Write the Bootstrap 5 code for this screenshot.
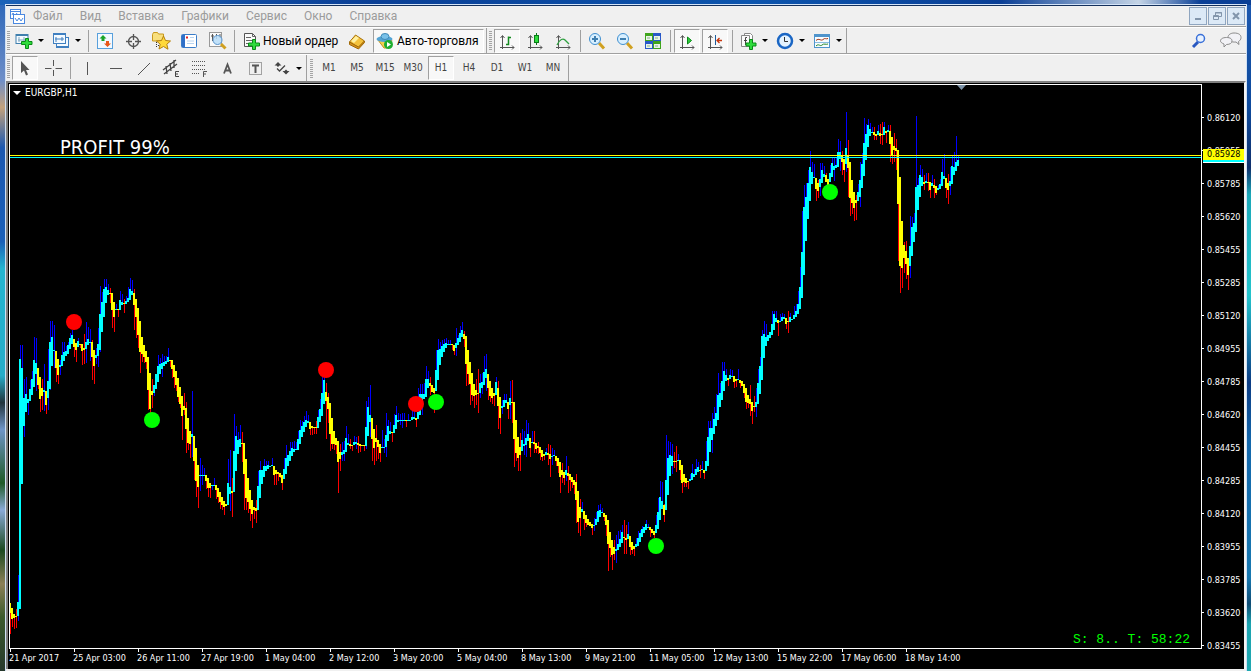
<!DOCTYPE html>
<html lang="ru">
<head>
<meta charset="utf-8">
<meta name="viewport" content="width=device-width, initial-scale=1">
<title>EURGBP,H1</title>
<link href="https://cdn.jsdelivr.net/npm/bootstrap@5.3.0/dist/css/bootstrap.min.css" rel="stylesheet">
<style>
  body{font-family:Roboto,"Noto Sans",sans-serif;font-size:12px;line-height:16px;color:#000;
    background:linear-gradient(90deg,#1c63b8,#0a3f96 30%,#0c55ae 60%,#0a3f96 80%,#c4d4e6 91%,#0a3f96 96%) top/100% 5px no-repeat,
    linear-gradient(180deg,#1c58b0 0,#0e4a9c 16%,#10306c 25%,#1ca8b8 29%,#24c4cc 44%,#0c3c84 57%,#1468ac 66%,#1878b0 86%,#104c74 90%,#1ca4b0 93%,#20a8b0 100%) right/12px 100% no-repeat,
    linear-gradient(180deg,#2c66b8 0,#6f8fc8 12%,#c4a27c 16%,#1c58b0 22%,#1b60b8 36%,#25b5d0 40%,#27acc8 56%,#22343c 60%,#6f95c8 64%,#1f5a26 72%,#8aaad8 76%,#1c4a20 82%,#8c8058 87%,#3c5a2c 92%,#26382c 100%);}
  .desktop{padding:4px 4px 0 5px;min-height:100vh}
  .win{background:#f0f0f0;border:1px solid #cfe0f4;border-top:1px solid #d4e4f8;border-bottom:0;box-shadow:inset 0 1px #14305c}
  .menu{height:22px;border-bottom:1px solid #a0a0a0;padding:1px 1px 0 4px}
  .menu a{color:#9b9b9b;text-decoration:none}
  .menu nav{gap:17px;margin-left:8px}
  .mdi{width:18px;height:18px;border:1px solid #8fa5bf;background:#dce9f6;padding:0}
  .mdi svg{display:block;margin:auto}
  .bar{height:27px;border-top:1px solid #fff}
  .bar.one{border-bottom:1px solid #a0a0a0;height:27px}
  .bar button{border:0;background:none;padding:0;color:#000;height:26px}
  .grip{width:3px;height:19px;margin:0 1px;background:repeating-linear-gradient(#a4a4a4 0 1px,#f0f0f0 1px 2px)}
  .grip.wide{margin:0 2px 0 3px}
  .tb{width:28px}
  .dd{width:37px;padding-left:4px!important;gap:5px}
  .dd::after{content:"";border:3px solid #0000;border-top-color:#000;border-bottom:0}
  .vsep{width:6px;height:22px;border-left:1px solid #a0a0a0;margin-left:3px;margin-right:-3px}
  .edge{width:1px;height:26px;background:#a0a0a0;margin:0 1px}
  .bar .on{background:#f8f8f8;border:1px solid;border-color:#a0a0a0 #fff #fff #a0a0a0;width:26px;margin:0 1px;height:24px}
  .bar .auto{width:111px;margin-left:2px;padding-left:2px;gap:3px}
  .bar .order{width:106px;padding-left:6px;gap:3px}
  .bar .tf{font:10px/14px "DejaVu Sans Condensed","DejaVu Sans",sans-serif;color:#444}
  svg{flex:none}
  .chart{background:#000;color:#fff;border-top:2px solid #808080;border-left:2px solid #808080;border-right:2px solid #f4f4f4;padding:1px 0 0 1px;font:9px/12px "DejaVu Sans Condensed","DejaVu Sans",sans-serif}
  .plot{border:1px solid #fff;height:565px;min-width:0}
  .plot svg{display:block}
  .symbol{left:3px;top:2px;font-size:10px}
  .profit{left:50px;top:50px;font-size:20px;line-height:24px}
  .stat{right:11px;bottom:1px;font:13px/14px "Liberation Mono",monospace;color:#0f0;white-space:pre}
  .hl{left:0;right:0;height:1px}
  .bid{top:70px;background:#ff0}
  .ask{top:72px;background:#0ff}
  .shift{top:0;left:79.5%}
  .axis{width:42px;height:565px;padding-top:17px}
  .axis span{display:flex;align-items:center;height:33px;gap:3px}
  .axis span::before{content:"";width:2px;height:1px;background:#fff}
  .now{left:1px;right:0;top:65px;height:14px;background:#ff0;color:#000;border-bottom:1px solid #fff;box-shadow:inset 0 -2px #0ff;padding-left:4px;line-height:11px}
  .times{height:20px}
  .times span{flex:0 0 64px;white-space:nowrap;position:relative;padding-top:3px}
  .times span::before{content:"";position:absolute;left:1px;top:0;width:1px;height:3px;background:#fff}
  .foot{height:2px}
</style>
</head>
<body>
<div class="desktop d-flex flex-column">
<main class="win flex-grow-1 d-flex flex-column">
  <header class="menu d-flex align-items-center">
    <svg width="15" height="15" viewBox="0 0 15 15" fill="#fff" stroke="#4a88e0"><rect x=".5" y=".5" width="10" height="9"/><path d="M0 2.500h10M2 6l1-2 2 3 2-3"/><rect x="3.500" y="5.500" width="11" height="9"/><path d="M5 9l2 3 2-3 2 3 2-3"/></svg>
    <nav class="d-flex" aria-label="Меню"><a href="#">Файл</a><a href="#">Вид</a><a href="#">Вставка</a><a href="#">Графики</a><a href="#">Сервис</a><a href="#">Окно</a><a href="#">Справка</a></nav>
    <div class="d-flex ms-auto" style="gap:1px">
      <button class="mdi" aria-label="Свернуть"><svg width="12" height="12"><path d="M3 9h6" stroke="#8295ab" stroke-width="2"/></svg></button>
      <button class="mdi" aria-label="Восстановить"><svg width="12" height="12" fill="none" stroke="#8295ab"><path d="M4.500 5V2.500h6v4H8M4 3h7M2 6.500h6M2.500 5.500h5v4h-5z"/></svg></button>
      <button class="mdi" aria-label="Закрыть"><svg width="12" height="12"><path d="M3 3l6 6M9 3l-6 6" stroke="#8295ab" stroke-width="2"/></svg></button>
    </div>
  </header>

  <div class="bar one d-flex align-items-center" role="toolbar" aria-label="Стандартная">
    <i class="grip"></i>
    <button class="dd d-flex align-items-center" aria-label="Новый график"><svg width="18" height="18"><rect x="1" y="2.500" width="12" height="9" fill="#f4faff" stroke="#3f7fae"/><path d="M1 3h12" stroke="#3f7fae" stroke-width="2"/><path d="M4 5v5M3 8h7M9 5v4" stroke="#7ea6c0"/><path d="M10.500 6.500h3v3h3.500v3h-3.500v4h-3v-4h-4v-3h4z" fill="#2fdc3c" stroke="#0a8a18"/></svg></button>
    <button class="dd d-flex align-items-center" aria-label="Профили"><svg width="18" height="18" fill="#f4faff" stroke="#3f7fc0"><rect x="4.500" y="5.500" width="12" height="10"/><path d="M4 14.500h12"/><rect x="1.500" y="1.500" width="12" height="10"/><path d="M2 2.500h11M4 5v5M3 7h9M10 5v4"/></svg></button>
    <i class="vsep"></i>
    <button class="tb" aria-label="Обзор рынка"><svg width="18" height="18"><rect x="1.500" y="1.500" width="15" height="15" fill="#f2f9ff" stroke="#58a0dc"/><path d="M7 3l3.500 3.500H8.500V9h-3V6.500h-2z" fill="#18a428"/><path d="M11.500 15l3.500-3.500h-2V9h-3v2.500H8z" fill="#e85818"/></svg></button>
    <button class="tb" aria-label="Перекрестие"><svg width="18" height="18" fill="none" stroke="#555" stroke-width="1.300"><circle cx="9.500" cy="9.500" r="5"/><path d="M9.500 2v6M9.500 11v6M2 9.500h6M11 9.500h6"/></svg></button>
    <button class="tb" aria-label="Навигатор"><svg width="20" height="19"><path d="M1.500 3.500l1-2h4l1 1.500h5v7h-11z" fill="#f8df7c" stroke="#c8981c"/><path d="M5.500 11v6M7 14.500h3" stroke="#333" stroke-dasharray="1 1"/><path d="M12.500 5l2 4.500 5 .5-3.700 3.200 1.200 5-4.500-2.700L8 18l1.200-4.800L5.500 10l5-.5z" fill="#ffd93a" stroke="#b4800e"/></svg></button>
    <button class="tb" aria-label="Терминал"><svg width="18" height="18"><rect x="1.500" y="2.500" width="15" height="13" rx="1" fill="#fff" stroke="#3a7cc8"/><path d="M2 3h3v12H2z" fill="#2f6fc8"/><path d="M6 5.500h2" stroke="#e02020" stroke-width="2"/><path d="M7 9h7M7 11.500h7M10 5.500h4" stroke="#b8d4f0"/></svg></button>
    <button class="tb" aria-label="Тестер"><svg width="19" height="19"><rect x="1.500" y="1.500" width="12" height="14" fill="#fafafa" stroke="#999"/><path d="M4.500 3v7M3 5h3M8.500 3v5M12 3v4" stroke="#555"/><circle cx="9.500" cy="9" r="4.500" fill="#b8dcf8dd" stroke="#5a94cc"/><path d="M13 13l4.500 4.500" stroke="#d0a020" stroke-width="3"/></svg></button>
    <i class="vsep"></i>
    <button class="order d-flex align-items-center"><svg width="17" height="18"><path d="M1.500 1.500h8l3 3v10h-11z" fill="#fafafa" stroke="#555"/><path d="M9.500 1.500v3h3M3 5.500h5M3 8.500h6M3 11.500h4" fill="none" stroke="#666"/><path d="M9.500 7.500h3v3.500h4v3h-4v3.500h-3v-3.500H5.500v-3h4z" fill="#2fdc3c" stroke="#0a8a18"/></svg>Новый&nbsp;ордер</button>
    <button class="tb" aria-label="MetaEditor"><svg width="18" height="18"><path d="M1.500 10l6-7 9 6-6 6.500z" fill="#f4c23c" stroke="#a87008"/><path d="M3 9l5-5 3 2-5 5z" fill="#fff0a0"/><path d="M1.500 10v2.500l9 4.500 6-6.500V9l-6 6z" fill="#d8921c" stroke="#a06a08"/></svg></button>
    <button class="on auto d-flex align-items-center"><svg width="18" height="18"><path d="M2 8h14l-5 8H8z" fill="#f2cf50" stroke="#c09420"/><ellipse cx="8.500" cy="7" rx="8" ry="3" fill="#54a4d4"/><ellipse cx="9" cy="4.500" rx="4" ry="3" fill="#78c0e8" stroke="#3f8ab8"/><circle cx="12.500" cy="12.500" r="4.500" fill="#1fae30"/><path d="M11 10v5l4-2.500z" fill="#fff"/></svg>Авто-торговля</button>
    <i class="edge"></i><i class="grip"></i>
    <button class="on" aria-label="Бары"><svg width="18" height="18" fill="none" stroke="#555"><path d="M4.500 17V4M2.500 6l2-2.500 2 2.500M2 15.500h14M14 13.500l2 2-2 2"/><path d="M8 12.500h2.500v-8M10.500 5.500H13" stroke="#148a20" stroke-width="1.500"/></svg></button>
    <button class="tb" aria-label="Свечи"><svg width="18" height="18" fill="none" stroke="#555"><path d="M4.500 17V4M2.500 6l2-2.500 2 2.500M2 15.500h14M14 13.500l2 2-2 2"/><path d="M10.500 1v12" stroke="#0a7a18"/><rect x="8.500" y="3.500" width="4" height="7" fill="#2fdc3c" stroke="#0a7a18"/></svg></button>
    <button class="tb" aria-label="Линия"><svg width="18" height="18" fill="none" stroke="#555"><path d="M4.500 17V4M2.500 6l2-2.500 2 2.500M2 15.500h14M14 13.500l2 2-2 2"/><path d="M3 13c3-6 6-7 8-5l4 4" stroke="#2fa040" stroke-width="1.300"/></svg></button>
    <i class="vsep"></i>
    <button class="tb" aria-label="Увеличить"><svg width="18" height="18"><path d="M11 11l5 5.500" stroke="#d0a020" stroke-width="3"/><circle cx="7" cy="7" r="5.500" fill="#d8efff" stroke="#3f8fd0"/><path d="M4 7h6M7 4v6" stroke="#3f7fb0" stroke-width="2"/></svg></button>
    <button class="tb" aria-label="Уменьшить"><svg width="18" height="18"><path d="M11 11l5 5.500" stroke="#d0a020" stroke-width="3"/><circle cx="7" cy="7" r="5.500" fill="#d8efff" stroke="#3f8fd0"/><path d="M4 7h6" stroke="#3f7fb0" stroke-width="2"/></svg></button>
    <button class="tb" aria-label="Окна"><svg width="18" height="18"><path d="M1 1h8v8H1zM9 9h8v8H9z" fill="#3fa41c"/><path d="M9 1h8v8H9zM1 9h8v8H1z" fill="#2858c8"/><path d="M2 4h6v4H2zM10 4h6v4h-6zM2 12h6v4H2zM10 12h6v4h-6z" fill="#e8f4e8"/><path d="M3 6h3M11 6h3M3 14h3M11 14h3" stroke="#8ab08a"/></svg></button>
    <i class="vsep"></i>
    <button class="on" aria-label="Автопрокрутка"><svg width="18" height="18" fill="none" stroke="#555"><path d="M4.500 17V4M2.500 6l2-2.500 2 2.500M2 15.500h14M14 13.500l2 2-2 2"/><path d="M9.500 5v7l4-3.500z" fill="#2fcc3c" stroke="#0a8a18"/></svg></button>
    <button class="on" aria-label="Сдвиг графика"><svg width="18" height="18" fill="none" stroke="#555"><path d="M4.500 17V4M2.500 6l2-2.500 2 2.500M2 15.500h14M14 13.500l2 2-2 2"/><path d="M9.500 3v10" stroke="#1c5c9c"/><path d="M11 8.500h5M13.500 6L11 8.500l2.500 2.500" stroke="#c83810" stroke-width="1.300"/></svg></button>
    <i class="vsep"></i>
    <button class="dd d-flex align-items-center" aria-label="Индикаторы"><svg width="18" height="18"><path d="M5.500 1.500h6l2 2v9h-8z" fill="#fff" stroke="#888"/><path d="M2.500 3.500h8v11h-8z" fill="#fafafa" stroke="#888"/><path d="M8 5.500H6.500V13M5 8.500h3" fill="none" stroke="#444"/><path d="M10.500 7.500h3v3.500h3.500v3h-3.500v3.500h-3v-3.500H7v-3h3.500z" fill="#2fdc3c" stroke="#0a8a18"/></svg></button>
    <button class="dd d-flex align-items-center" aria-label="Периоды"><svg width="18" height="18"><circle cx="9" cy="9" r="7" fill="#e4f3ff" stroke="#1a66c4" stroke-width="2.500"/><path d="M8.500 5v4.500H12" fill="none" stroke="#333"/></svg></button>
    <button class="dd d-flex align-items-center" aria-label="Шаблоны"><svg width="18" height="18"><rect x="1.500" y="2.500" width="15" height="13" fill="#f7fcff" stroke="#4f94cc"/><path d="M1 3.500h16" stroke="#4f94cc" stroke-width="3"/><path d="M3 8.500c3-3 5 1 7-1s3 0 5-1" fill="none" stroke="#a03010"/><path d="M2 10.500h14" stroke="#8abce0"/><path d="M3 14c3-3 4 1 6-1s4 0 6-1" fill="none" stroke="#28882c"/></svg></button>
    <i class="edge m-0"></i>
    <div class="d-flex ms-auto me-1" style="gap:13px">
      <button aria-label="Поиск"><svg width="16" height="16"><path d="M7 9l-5 5" stroke="#2858c0" stroke-width="3"/><circle cx="9.500" cy="5.500" r="4" fill="#e8f2ff" stroke="#3a70d8" stroke-width="1.500"/></svg></button>
      <button aria-label="Чат"><svg width="22" height="17" fill="#f2f2f6" stroke="#8c8c8c"><path d="M14 1c5 0 7 2 7 4.500 0 2-1 3-2.500 4l.5 3-3-2.500c-5 .5-8-1.500-8-4.500s3-4.500 6-4.500z"/><path d="M6.500 5.500c4 0 5.500 1.500 5.500 3.500S10 12.500 6.500 12.500L4 15v-3C1.500 11 .5 10 .5 9c0-2 2-3.500 6-3.500z"/></svg></button>
    </div>
  </div>

  <div class="bar d-flex align-items-center" role="toolbar" aria-label="Графические инструменты">
    <i class="grip"></i>
    <button class="on" aria-label="Курсор"><svg width="18" height="18"><path d="M5 2v12l3-2.500 2 5 2-1-2-4.500h3.500z" fill="#555"/></svg></button>
    <button class="tb" aria-label="Крест"><svg width="18" height="18" stroke="#555"><path d="M9.500 1v6M9.500 11v6M1 9.500h6.500M11.500 9.500H18"/></svg></button>
    <i class="vsep"></i>
    <button class="tb" aria-label="Вертикальная линия"><svg width="18" height="18" stroke="#555"><path d="M9.500 3v13"/></svg></button>
    <button class="tb" aria-label="Горизонтальная линия"><svg width="18" height="18" stroke="#555"><path d="M4 9.500h12"/></svg></button>
    <button class="tb" aria-label="Трендовая линия"><svg width="18" height="18" stroke="#555"><path d="M4 16L16 4"/></svg></button>
    <button class="tb" aria-label="Канал"><svg width="18" height="18" stroke="#444"><path d="M1 11L14 1M2 15L15 5M4 7l1 8M8 4l1 8M12 1l0 8" stroke-width="1.300"/><path d="M17 12.500h-3.500v5H17M13.500 15H16" fill="none"/></svg></button>
    <button class="tb" aria-label="Фибоначчи"><svg width="18" height="18" stroke="#555"><path d="M2 2.500h14M2 6.500h14M2 10.500h14M2 14.500h8" stroke-dasharray="1 1"/><path d="M17 12.500h-3.500V18M13.500 15H16" fill="none"/></svg></button>
    <button class="tb" aria-label="Текст"><svg width="18" height="18" fill="none" stroke="#555" stroke-width="1.800"><path d="M6 14.500L9.500 5.500 13 14.500M7 11.500h5"/></svg></button>
    <button class="tb" aria-label="Метка"><svg width="18" height="18" fill="none" stroke="#555"><rect x="3.500" y="3.500" width="12" height="12" stroke-dasharray="1 1"/><path d="M6 6.500h7M9.500 6v8" stroke-width="2"/></svg></button>
    <button class="dd d-flex align-items-center" aria-label="Стрелки"><svg width="18" height="18" fill="#444"><path d="M5 3l3.500 3.500h-2L5 8 3.500 6.500h-2zM13 15.500L9.500 12h2l1.500-1.500 1.500 1.500h2z"/><path d="M4 9.500l2.500 2.500L12 6.500" fill="none" stroke="#444" stroke-width="1.300"/></svg></button>
    <i class="edge m-0"></i><i class="grip wide"></i>
    <button class="tb tf">M1</button><button class="tb tf">M5</button><button class="tb tf">M15</button><button class="tb tf">M30</button><button class="on tf">H1</button><button class="tb tf">H4</button><button class="tb tf">D1</button><button class="tb tf">W1</button><button class="tb tf">MN</button>
    <i class="edge"></i>
  </div>

  <section class="chart flex-grow-1">
    <div class="d-flex">
      <div class="plot flex-grow-1 position-relative overflow-hidden">
        <svg id="candles" width="960" height="563" viewBox="10 85 960 563" shape-rendering="crispEdges"></svg>
        <div class="hl bid position-absolute"></div>
        <div class="hl ask position-absolute"></div>
        <div class="symbol position-absolute d-flex align-items-center gap-1"><svg width="8" height="4"><path d="M0 0h8L4 4z" fill="#fff"/></svg>EURGBP,H1</div>
        <div class="profit position-absolute">PROFIT 99%</div>
        <div class="stat position-absolute">S: 8.. T: 58:22</div>
        <svg class="shift position-absolute" width="10" height="5"><path d="M0 0h9L4.500 5z" fill="#7d93a8"/></svg>
      </div>
      <div class="axis position-relative flex-shrink-0">
        <span>0.86120</span><span>0.85955</span><span>0.85785</span><span>0.85620</span><span>0.85455</span><span>0.85285</span><span>0.85120</span><span>0.84955</span><span>0.84785</span><span>0.84620</span><span>0.84455</span><span>0.84285</span><span>0.84120</span><span>0.83955</span><span>0.83785</span><span>0.83620</span><span>0.83455</span>
        <div class="now position-absolute">0.85928</div>
      </div>
    </div>
    <div class="times d-flex">
      <span>21 Apr 2017</span><span>25 Apr 03:00</span><span>26 Apr 11:00</span><span>27 Apr 19:00</span><span>1 May 04:00</span><span>2 May 12:00</span><span>3 May 20:00</span><span>5 May 04:00</span><span>8 May 13:00</span><span>9 May 21:00</span><span>11 May 05:00</span><span>12 May 13:00</span><span>15 May 22:00</span><span>17 May 06:00</span><span>18 May 14:00</span>
    </div>
  </section>
  <div class="foot"></div>
</main>
</div>
<script src="https://cdn.jsdelivr.net/npm/bootstrap@5.3.0/dist/js/bootstrap.bundle.min.js"></script>
<script>
// Heiken Ashi bars, two pixels apart: close, then optional high (h) and low (l).
const bars = `
613l634 619l627 618l629 617l628h609 602h575l621 359h345 368h345l484 398h379l437 394h377 399l415 389h380 379h371 360h337l386 363h338l391 385l389h368 399l412 396l410h379 390h364l411
405l414 381h349l410 342h321l390 337h321 350h325l368 368l382 375l384 365h360l375 355h342 352h342 351h346 345h342 338h333 335h330 347l357 350l362 341h338 345l348 351l365 350l364h334
342h322l363 339h327 342h329l361 357h340l380 366l384 355h348l364 344h328l367 314h286l352 302h292 289h279 287h279 290h284 294l303h288 310l328 317l332 309h304 310l317 300h291l308 302h294
304l313h299 301h296 298h287 289h278 291h280 305l330h289 317l338 335l348 352l373 354l362 357l363 362l369 390l410 409l421 395h379l408 385l396 374 366h355 364h358 363h354l377 362h356 361h356
357h348 361l367 369l378 377l388 385l391 397l402 404l408 416l440 410l415h393 429h402l453 443l450 444l458 434h391l457 461l480 481l497 487l508 475l491h458 475h465l485 475h468 481l489 488l497
488l498 485l490 485h478 490l499 497l503 502l509 505l510 507l515 506 483h459l505 487h450l511 493h478l517 451h414 436h426 440h432 439h425 444l462h432 474l510 498l510 502l513 509l521
514l528 510l519 511l523h500 486h471 470h461 470 466h459 466h461 465h461 466 465h458 475l485 474l485 474l481 477l478 483l490 469h458 458h445 455h456 451h442 448h442 449h441 449h442
439h431 430h420 426h421 422h416 420h411 421h415 429l435 428l435 428l434 428l434h421 417h410 409h399 393h377 380h376 401h383l439 409h393l423 434l451 444l449 444l450 445l454 462l493
459l471h444 452h442l461 450h441l461 438h426 443h434 446l449h439 446l451 442h436 442h437l449 445l453h436 446l452 446 446l451 427h401l449 407h397 415h385l437 439l461 448l465 442l461h425
447l459 453l462 447h430 447h439l453 435h413l457 426h420 431h422 433l442 425h414 415h406 420h413 420l425h414 420h413l428 420h413 421l427 420h414 420 417h411 417h411 420l427 412h388 394h384
394h384l415 394h383 379h366 379h371 386l395h377 392 393l413 370h350 350h339 349h342 346h340 344h339 343h338 344h340 344h340 345l350 351l355 343h328l356 338h335 333h326 330h322 339h331l347
364l386 374l385 384l405 395l401 396l408 395l405h379 393l413h369 383h374l398 382h373l394 372h356 369h354l391 388l400 396l402 398l404 396l406 382h377 406l429h381 418l434 406h400l414 400h394
400h394 409l419 398h381l419 402l423h380 439l467 453l461 458l471 455l471h433 440h429 444h431l455 438h420l457 434h423 448l457 442h431 444l453h431 449l453 448l454h442 453l460 457l461 456l460
452h448 455l465h444 459l477h445 456h448l465 455h450 461l466 466l473 477l493 475l483h463 478l485 470h456l481 476l493h466 480l491 482l488 485l494 500h474l523 522l533 518h499l536 509h502
519l530 523l527 525 526 528l535 525h518l531 519h512 511h505 510h504 512h508 517l521 525l536 544l571 548l557 555l570 554l560h540 549h535l563 544h531 539h530 532h525 538l554h520 540l554h525
534h522 547l555 550l554 549l556 544h538 538h531 533h530 529h526 527 524h520 527h524 530l537 533 535l538 525h515 512h498 497h481 501h482 515h504l522 480h435 458h441 455h442 456h444l474
461l468h452 461h446l472 460h454 470l480 483l493 482l487 483l487 482l489 479h474 473h464 474h469 469h459 467h462 471l478h465 469h461 473l479 461h441 437h421 428h421 428h413l453 419h407
413h394 395h373 393h383 381h362 371h362 375h369 380l386 375h369 376h370 382l388 381l387 379h369 383l388 386 393l398 402l409 403l408 404h385l416 411l424 407h396l412 402h388l417 383h369
366h357 336h330 334h321 337h324 335 332 324h311 314h311 318h311 323l336 321h314 317h313 317h314 324l329 322l333h311 317h313 319 315h306 311h304 304h291 287h267 252h211 207h185 197h183
183h170 167h151 172h162 177h164 189l201 191l198h180 179h163l196 170h163 174h166 182h173 185 173h165 163h157 166h158l181 165h158 152h139 152h141l171 162l175h151 170l182 148h112l172
168l197h140 198l216 203l214 208l221 203l220h195 192h184 180h162l207 164h153 143h118 134h124 125h119 129h123 132h127 135l140h127 136l140 131h125 136l144h124 135l145h122 127h122 133l143
130h125 144l162h125 155l164 150l162h133 151l170h139 204l261 266l293 268l288 258l273h242 264l279h241 275l290 246h216l278 227h217 223h213 187h116 185h178 175h165 177h169 184h175l190 181h173
183l191h173 190l198 183h175 188l198h179 193l195 188h185 184h179 172h159 176h154 188l198 190l204h174 181h167l195 166h156 167h152 162h136 160h155`.trim().split(/\s+/);

const signals = [[74,322,'red'],[152,420,'lime'],[326,370,'red'],[416,404,'red'],[436,402,'lime'],[656,546,'lime'],[830,192,'lime']];
let open = 603, out = '';
bars.forEach((bar, i) => {
  const close = +bar.match(/^\d+/)[0];
  const high = +(bar.match(/h(\d+)/) || [0, 999])[1], low = +(bar.match(/l(\d+)/) || [0, 0])[1];
  const up = close <= open, x = 10 + 2 * i;
  const top = Math.round(Math.min(open, close)), bottom = Math.max(top + 1, Math.round(Math.max(open, close)));
  const t = Math.min(top, high), b = Math.max(bottom, low);
  out += `<rect x="${x}" y="${t}" width="1" height="${b - t}" fill="${up ? 'blue' : 'red'}"/>`
       + `<rect x="${x - 1}" y="${top}" width="2" height="${bottom - top}" fill="${up ? 'cyan' : 'yellow'}"/>`;
  open = (open + close) / 2;
});
signals.forEach(([x, y, c]) => out += `<circle cx="${x}" cy="${y}" r="8" fill="${c}" shape-rendering="auto"/>`);
document.getElementById('candles').innerHTML = out;
</script>
</body>
</html>
